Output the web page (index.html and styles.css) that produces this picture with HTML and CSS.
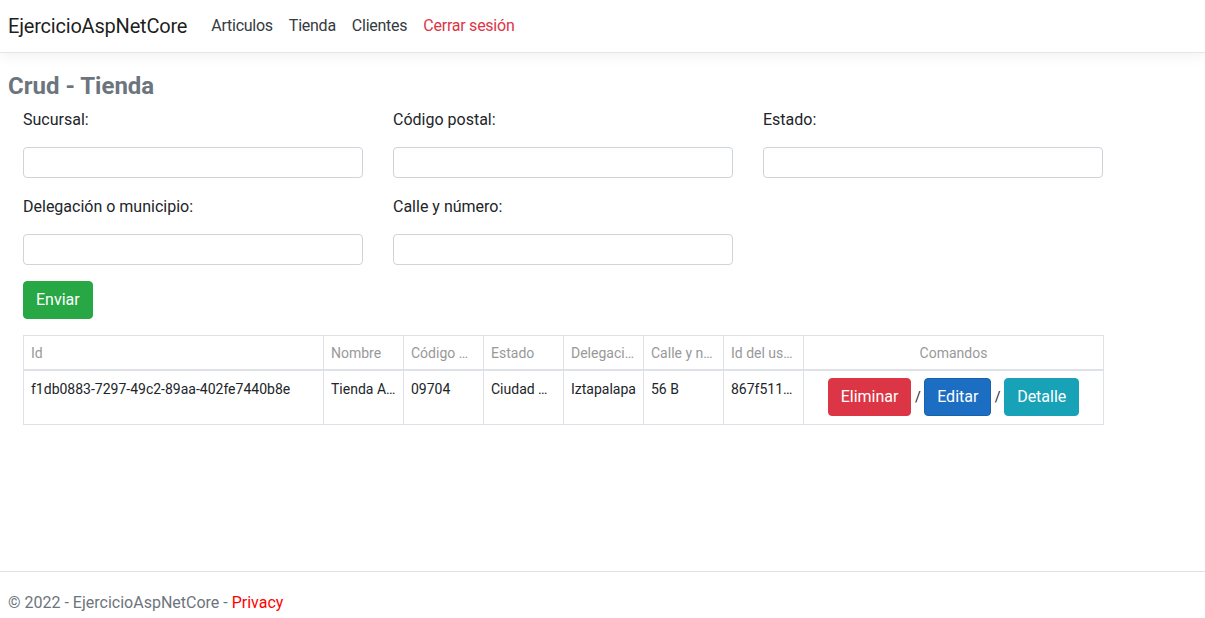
FILE: index.html
```html
<!DOCTYPE html>
<html lang="es">
<head>
<meta charset="utf-8">
<title>Crud - Tienda</title>
<link rel="stylesheet" href="styles.css">
</head>
<body>
<div class="page">
  <header class="navbar">
    <a class="brand" href="#">EjercicioAspNetCore</a>
    <nav class="nav">
      <a class="nav-link" href="#">Articulos</a>
      <a class="nav-link" href="#">Tienda</a>
      <a class="nav-link" href="#">Clientes</a>
      <a class="nav-link nav-danger" href="#">Cerrar sesión</a>
    </nav>
  </header>

  <main class="content">
    <h3 class="page-title">Crud - Tienda</h3>
    <form class="form-grid">
      <div class="field"><label class="field-label">Sucursal:</label><input class="form-control" type="text"></div>
      <div class="field"><label class="field-label">Código postal:</label><input class="form-control" type="text"></div>
      <div class="field"><label class="field-label">Estado:</label><input class="form-control" type="text"></div>
      <div class="field"><label class="field-label">Delegación o municipio:</label><input class="form-control" type="text"></div>
      <div class="field"><label class="field-label">Calle y número:</label><input class="form-control" type="text"></div>
    </form>
    <div class="actions">
      <button class="btn btn-success" type="button">Enviar</button>
    </div>

    <table class="table">
      <colgroup>
        <col class="col-wide">
        <col class="col-narrow">
        <col class="col-narrow">
        <col class="col-narrow">
        <col class="col-narrow">
        <col class="col-narrow">
        <col class="col-narrow">
        <col class="col-wide">
      </colgroup>
      <thead>
        <tr>
          <th>Id</th>
          <th>Nombre</th>
          <th title="Código postal">Código …</th>
          <th>Estado</th>
          <th title="Delegación o municipio">Delegaci…</th>
          <th title="Calle y número">Calle y n…</th>
          <th title="Id del usuario">Id del us…</th>
          <th class="center">Comandos</th>
        </tr>
      </thead>
      <tbody>
        <tr>
          <td>f1db0883-7297-49c2-89aa-402fe7440b8e</td>
          <td>Tienda A…</td>
          <td>09704</td>
          <td>Ciudad …</td>
          <td>Iztapalapa</td>
          <td>56 B</td>
          <td>867f511…</td>
          <td class="center commands"><button class="btn btn-danger" type="button">Eliminar</button> / <button class="btn btn-primary" type="button">Editar</button> / <button class="btn btn-info" type="button">Detalle</button></td>
        </tr>
      </tbody>
    </table>
  </main>

  <footer class="footer">
    © 2022 - EjercicioAspNetCore - <a class="footer-link" href="#">Privacy</a>
  </footer>
</div>
</body>
</html>
```

FILE: styles.css
```css
* { box-sizing: border-box; }

html, body {
  margin: 0;
  padding: 0;
  height: 100%;
}

body {
  font-family: "Segoe UI", Roboto, "Noto Sans", sans-serif;
  font-size: 16px;
  line-height: 1.5;
  color: #212529;
  background: #fff;
  overflow: hidden;
}

.page {
  display: flex;
  flex-direction: column;
  height: 100vh;
}

/* Navbar */
.navbar {
  height: 53px;
  flex: none;
  display: flex;
  align-items: center;
  padding: 0 8px;
  background: #fff;
  border-bottom: 1px solid #e5e5e5;
  box-shadow: 0 4px 12px rgba(0, 0, 0, 0.05);
}

.brand {
  font-size: 20px;
  line-height: 30px;
  letter-spacing: -0.2px;
  color: rgba(0, 0, 0, 0.9);
  text-decoration: none;
  margin-right: 16px;
}

.nav {
  display: flex;
}

.nav-link {
  padding: 8px;
  color: #343a40;
  text-decoration: none;
  font-size: 16px;
  line-height: 24px;
  letter-spacing: -0.25px;
}

.nav-danger { color: #dc3545; }

/* Content */
.content {
  flex: 1;
  padding: 0 8px;
}

.page-title {
  margin: 19px 0 0;
  font-size: 24px;
  line-height: 29px;
  font-weight: 700;
  color: #6c757d;
}

.form-grid {
  margin: 7px 0 0;
  padding-left: 15px;
  display: grid;
  grid-template-columns: 340px 340px 340px;
  column-gap: 30px;
  row-gap: 17px;
}

.field {
  display: flex;
  flex-direction: column;
}

.field-label {
  display: block;
  line-height: 24px;
  margin-bottom: 15px;
  font-size: 16px;
}

.form-control {
  height: 31px;
  width: 340px;
  border: 1px solid #ced4da;
  border-radius: 4px;
  background: #fff;
  font-family: inherit;
  font-size: 14px;
  padding: 4px 8px;
}

.actions {
  margin-top: 16px;
  padding-left: 15px;
}

.btn {
  display: inline-block;
  font-family: inherit;
  font-size: 16px;
  line-height: 24px;
  padding: 6px 12px;
  border: 1px solid transparent;
  border-radius: 4px;
  color: #fff;
  cursor: pointer;
  vertical-align: middle;
}

.btn-success { background: #28a745; border-color: #28a745; }
.btn-danger { background: #dc3545; border-color: #dc3545; }
.btn-primary { background: #1b6ec2; border-color: #1861ac; }
.btn-info { background: #17a2b8; border-color: #17a2b8; }

/* Table */
.table {
  margin: 16px 0 0 15px;
  width: 1081px;
  table-layout: fixed;
  border-collapse: collapse;
  font-size: 14px;
  line-height: 21px;
}

.col-wide { width: 300px; }
.col-narrow { width: 80px; }

.table th,
.table td {
  border: 1px solid #dee2e6;
  white-space: nowrap;
  overflow: hidden;
  text-overflow: ellipsis;
  text-align: left;
  vertical-align: top;
}

.table th {
  padding: 7px 7px 5px;
  font-weight: 400;
  color: #999;
  border-bottom: 2px solid #dee2e6;
}

.table td {
  padding: 8px 7px;
  color: #212529;
}

.table .center { text-align: center; }

.table td.commands {
  padding: 7px 7px 8px;
  line-height: 38px;
  height: 54px;
}

.commands .btn { vertical-align: top; }

/* Footer */
.footer {
  flex: none;
  height: 47px;
  border-top: 1px solid #dee2e6;
  padding: 19px 8px 0;
  line-height: 24px;
  color: #6c757d;
  white-space: nowrap;
}

.footer-link {
  color: #f00;
  text-decoration: none;
}
```
